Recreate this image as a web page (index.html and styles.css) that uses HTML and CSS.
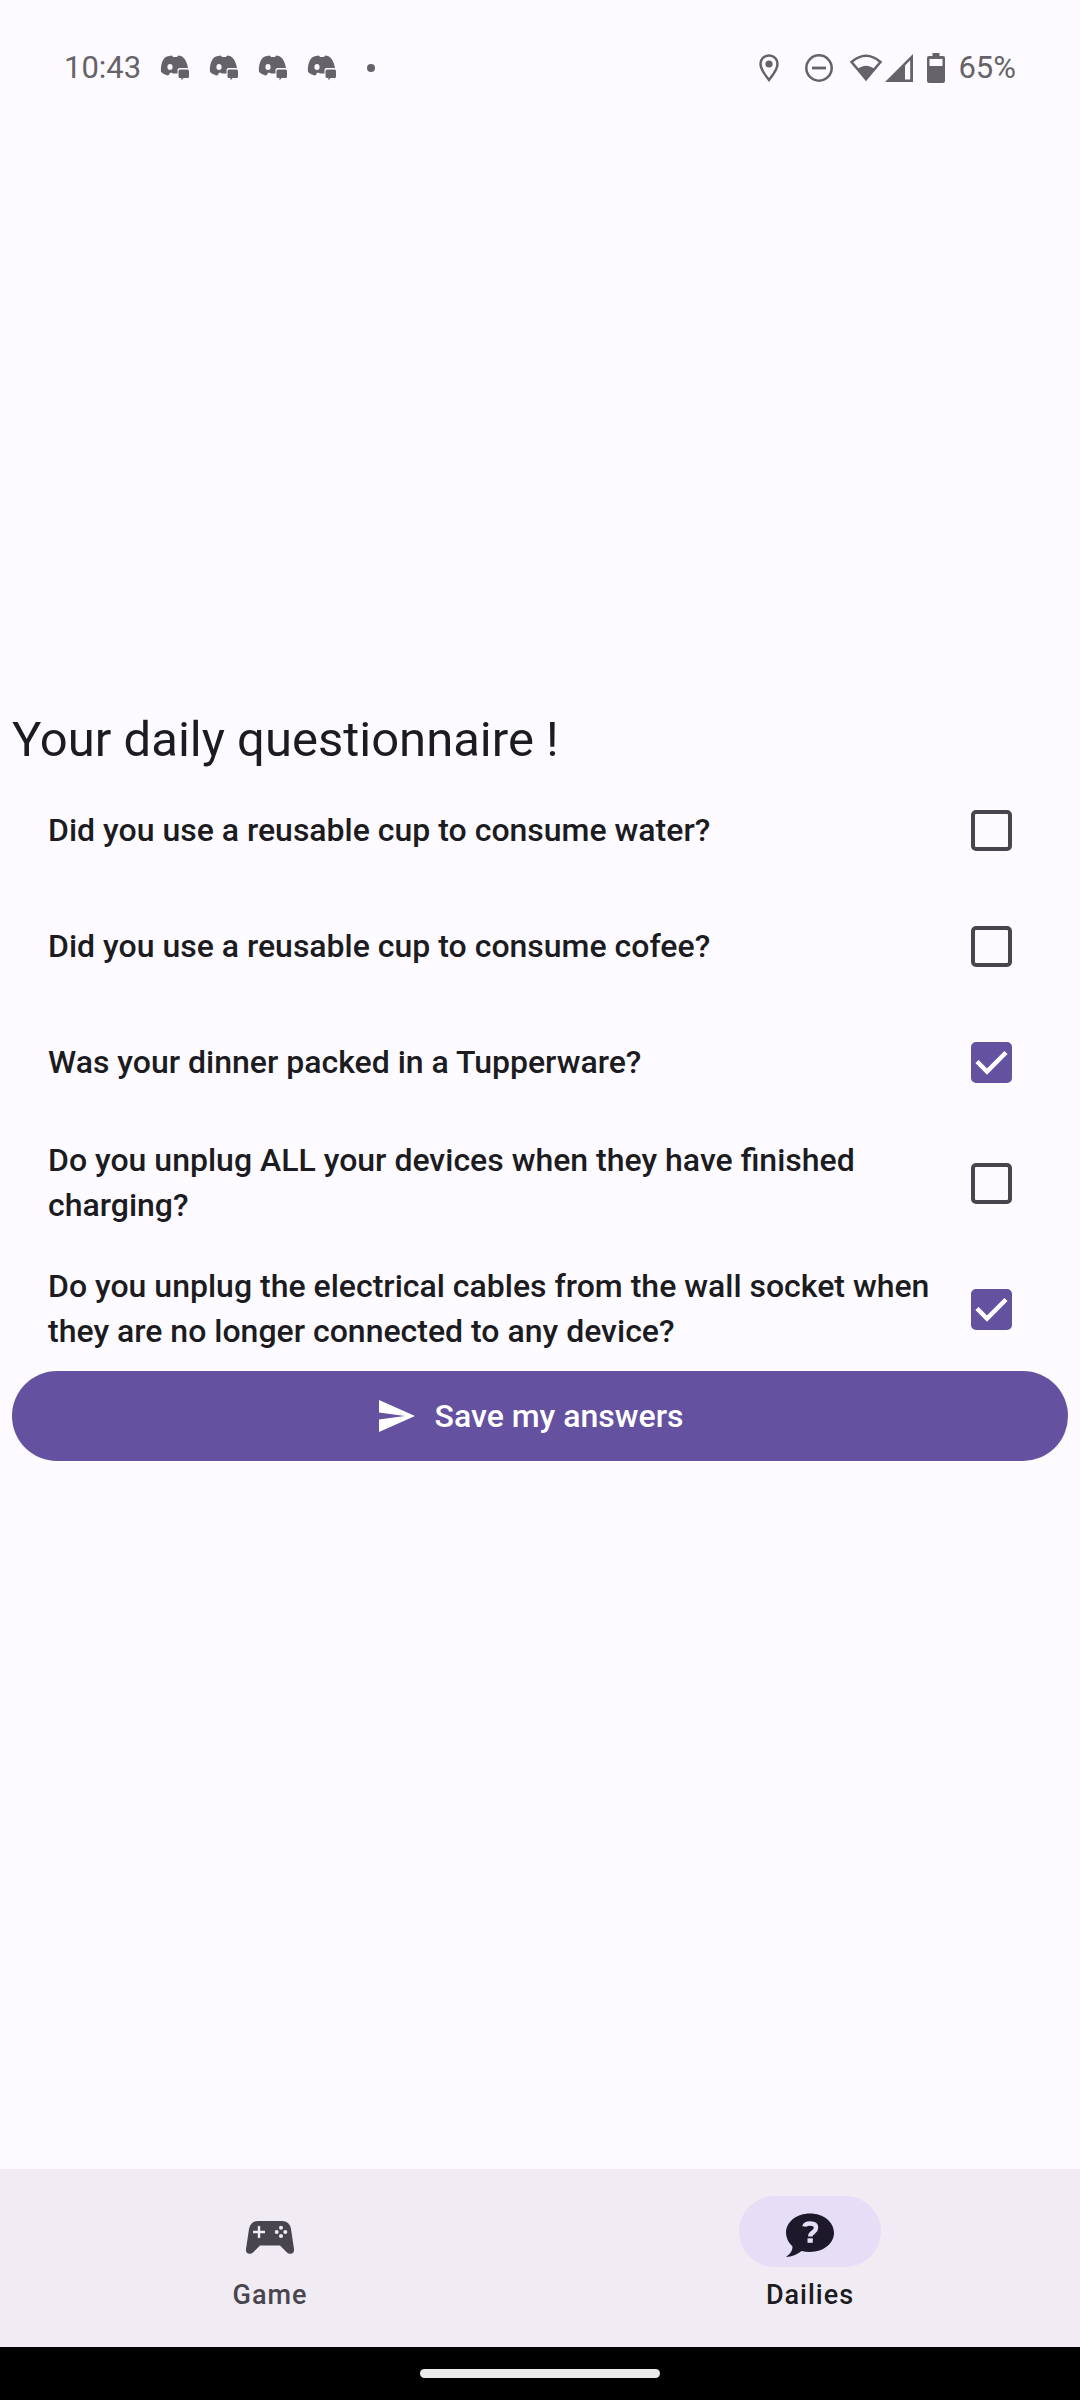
FILE: index.html
```html
<!DOCTYPE html>
<html lang="en">
<head>
<meta charset="utf-8">
<meta name="viewport" content="width=device-width, initial-scale=1">
<title>Dailies</title>
<link rel="stylesheet" href="styles.css">
</head>
<body>
<svg class="defs" aria-hidden="true">
  <symbol id="chat-app" viewBox="0 0 30 26">
    <path fill-rule="evenodd" d="M9 1 L12 0.5 L13 2 H17 L18 0.5 L21 1 C24.500 2.500 27 7 28 13 H19.500 Q17.500 13 17.500 15 V18.500 H13 L11 17.500 L9.500 18.500 L9 20 L7.500 20.500 Q3.500 19.500 1 17 C0.500 11 2 5.500 5 2.500 Q7 1.300 9 1 Z M10 9 A2.600 3 0 1 0 10 15 A2.600 3 0 1 0 10 9 Z"/>
    <path d="M20 14.500 H27.500 Q29 14.500 29 16 V21.500 Q29 23 27.500 23 H23.500 L21.500 25.500 V23 H20 Q18.500 23 18.500 21.500 V16 Q18.500 14.500 20 14.500 Z"/>
  </symbol>
</svg>

<header class="status">
  <div class="status-left">
    <time class="clock">10:43</time>
    <div class="notifications">
      <svg class="chat"><use href="#chat-app"/></svg>
      <svg class="chat"><use href="#chat-app"/></svg>
      <svg class="chat"><use href="#chat-app"/></svg>
      <svg class="chat"><use href="#chat-app"/></svg>
    </div>
    <span class="more-dot"></span>
  </div>
  <div class="status-right">
    <svg class="pin" width="20" height="28" viewBox="0 0 20 28"><path d="M10 1.500 A8.300 8.300 0 0 0 1.500 10 C1.500 15.500 6.500 21.500 10 26 C13.500 21.500 18.500 15.500 18.500 10 A8.300 8.300 0 0 0 10 1.500 Z" fill="none" stroke="currentColor" stroke-width="2.500"/><circle cx="10" cy="10" r="3.600" fill="currentColor"/></svg>
    <svg class="dnd" width="28" height="28" viewBox="0 0 28 28"><circle cx="14" cy="14" r="12.700" fill="none" stroke="currentColor" stroke-width="2.500"/><path d="M7 14 H21" stroke="currentColor" stroke-width="2.800"/></svg>
    <svg class="wifi" width="34" height="28" viewBox="0 0 34 28"><path d="M2.500 8 Q17 -4.500 31.500 8 L17 25 Z" fill="none" stroke="currentColor" stroke-width="2.600"/><path d="M8 15.500 Q17 8 26 15.500 L17 27 Z" fill="currentColor"/></svg>
    <svg class="signal" width="28" height="28" viewBox="0 0 28 28"><path fill-rule="evenodd" d="M28 0 V28 H0 Z M20 11.500 V25.500 H25.200 V6.300 Z" fill="currentColor"/></svg>
    <svg class="battery" width="18" height="30" viewBox="0 0 18 30"><path fill-rule="evenodd" d="M5.500 0 H12.500 V3 H16 Q18 3 18 5 V28 Q18 30 16 30 H2 Q0 30 0 28 V5 Q0 3 2 3 H5.500 Z M2.500 6 V13 H15.500 V6 Z" fill="currentColor"/></svg>
    <span class="charge">65%</span>
  </div>
</header>

<main class="content">
  <form class="questionnaire">
    <h1 class="title">Your daily questionnaire !</h1>
    <div class="question">
      <label class="question-text" for="q1">Did you use a reusable cup to consume water?</label>
      <input class="tick" type="checkbox" id="q1">
    </div>
    <div class="question">
      <label class="question-text" for="q2">Did you use a reusable cup to consume cofee?</label>
      <input class="tick" type="checkbox" id="q2">
    </div>
    <div class="question">
      <label class="question-text" for="q3">Was your dinner packed in a Tupperware?</label>
      <input class="tick" type="checkbox" id="q3" checked>
    </div>
    <div class="question">
      <label class="question-text" for="q4">Do you unplug ALL your devices when they have finished charging?</label>
      <input class="tick" type="checkbox" id="q4">
    </div>
    <div class="question">
      <label class="question-text" for="q5">Do you unplug the electrical cables from the wall socket when they are no longer connected to any device?</label>
      <input class="tick" type="checkbox" id="q5" checked>
    </div>
    <button class="save" type="button">
      <svg width="36" height="32" viewBox="0 0 36 32" aria-hidden="true"><path d="M0 32 L36 16 L0 0 V12.500 L25.700 16 L0 19.500 Z" fill="currentColor"/></svg>
      <span>Save my answers</span>
    </button>
  </form>
</main>

<nav class="tabs">
  <a class="tab" href="#game">
    <span class="tab-icon">
      <svg width="50" height="50" viewBox="0 -2 50 50"><path fill-rule="evenodd" d="M13 12 H37 Q44.500 12 46 20 L49 40 Q49.500 44.500 45.500 44.800 Q43.500 45 42 43.500 L35 36.500 H15 L8 43.500 Q6.500 45 4.500 44.800 Q0.500 44.500 1 40 L4 20 Q5.500 12 13 12 Z M12.800 17 V21.800 H8 V24.200 H12.800 V29 H15.200 V24.200 H20 V21.800 H15.200 V17 Z" fill="#49454f"/><g fill="#f1ecf4"><circle cx="36" cy="18.800" r="2"/><circle cx="36" cy="27" r="2"/><circle cx="31.700" cy="23" r="2"/><circle cx="40.300" cy="23" r="2"/></g></svg>
    </span>
    <span class="tab-label">Game</span>
  </a>
  <a class="tab tab-active" href="#dailies" aria-current="page">
    <span class="tab-icon">
      <svg width="50" height="50" viewBox="0 -2 50 50"><path d="M25 4.500 C38.500 4.500 49 13 49 23.800 C49 34.500 38.500 43 25 43 Q20.500 43 16.500 42 Q10 47.500 1 48 Q8 43 7.500 37.500 Q1 31.500 1 23.800 C1 13 11.500 4.500 25 4.500 Z" fill="#1d192b"/><path d="M19.500 17.500 Q20 14.500 25.300 14.500 Q31 14.500 31 18.700 Q31 21 28.500 23 Q25.300 25 25.300 27.500" fill="none" stroke="#e6def6" stroke-width="4.500"/><path d="M22.500 29.300 H27.800 V33.800 H22.500 Z" fill="#e6def6"/></svg>
    </span>
    <span class="tab-label">Dailies</span>
  </a>
</nav>
<div class="gesture"><span class="gesture-handle"></span></div>
</body>
</html>
```
FILE: styles.css
```css
* { box-sizing: border-box; }

body {
  margin: 0;
  min-height: 100vh;
  display: flex;
  flex-direction: column;
  background: #fdfbff;
  color: #1c1b1f;
  font-family: Roboto, "Liberation Sans", sans-serif;
}

svg { display: block; flex: none; }

.defs { display: none; }

.status {
  height: 136px;
  padding: 0 64px;
  display: flex;
  justify-content: space-between;
  align-items: center;
  color: #656268;
  font-size: 31px;
  line-height: 36px;
}

.status-left, .status-right { display: flex; align-items: center; }
.notifications { display: flex; gap: 19px; margin-left: 19px; }
.chat { width: 30px; height: 26px; fill: currentColor; }
.more-dot { width: 8px; height: 8px; border-radius: 50%; background: currentColor; margin-left: 30px; }

.dnd { margin-left: 26px; }
.wifi { margin-left: 16px; }
.signal { margin-left: 2px; }
.battery { margin-left: 14px; }
.charge { margin-left: 13px; }

/* The bottom padding balances the status bar so the form is centred above the tabs. */
.content {
  flex: 1;
  display: flex;
  flex-direction: column;
  justify-content: center;
  padding: 0 12px 136px;
}

.questionnaire { display: flex; flex-direction: column; }

.title {
  margin: 0;
  font-size: 49px;
  font-weight: 400;
  line-height: 63px;
}

.question {
  min-height: 116px;
  padding: 19px 36px 17px;
  display: flex;
  align-items: center;
}

.question-text {
  flex: 1;
  font-size: 32px;
  font-weight: 500;
  line-height: 45px;
}

.tick {
  appearance: none;
  flex: none;
  width: 41px;
  height: 41px;
  margin: 0 20px;
  border: 4px solid #49454f;
  border-radius: 5px;
}

.tick:checked {
  border-color: #64519f;
  background: #64519f url("data:image/svg+xml,%3Csvg xmlns='http://www.w3.org/2000/svg' viewBox='0 0 41 41'%3E%3Cpath d='M6 19.500L16 29.500L35 10.500' fill='none' stroke='white' stroke-width='4.500'/%3E%3C/svg%3E") border-box;
  background-origin: border-box;
}

.save {
  height: 90px;
  border: 0;
  border-radius: 45px;
  padding: 0 54px 0 36px;
  display: flex;
  justify-content: center;
  align-items: center;
  gap: 20px;
  background: #64519f;
  color: #fff;
  font: 500 32px/45px Roboto, "Liberation Sans", sans-serif;
}

.tabs {
  display: flex;
  height: 178px;
  background: #f1ecf4;
}

.tab {
  flex: 1;
  display: flex;
  flex-direction: column;
  align-items: center;
  padding-top: 27px;
  gap: 10px;
  color: #49454f;
  text-decoration: none;
}

.tab-active { color: #1c1b1f; }

.tab-icon {
  width: 142px;
  height: 71px;
  border-radius: 36px;
  display: flex;
  align-items: center;
  justify-content: center;
}

.tab-active .tab-icon { background: #e6def6; }

.tab-label {
  font-size: 27px;
  font-weight: 500;
  line-height: 36px;
  letter-spacing: 1px;
}

.gesture {
  height: 53px;
  display: flex;
  align-items: center;
  justify-content: center;
  background: #000;
}

.gesture-handle { width: 240px; height: 9px; border-radius: 5px; background: #ebebeb; }
```
